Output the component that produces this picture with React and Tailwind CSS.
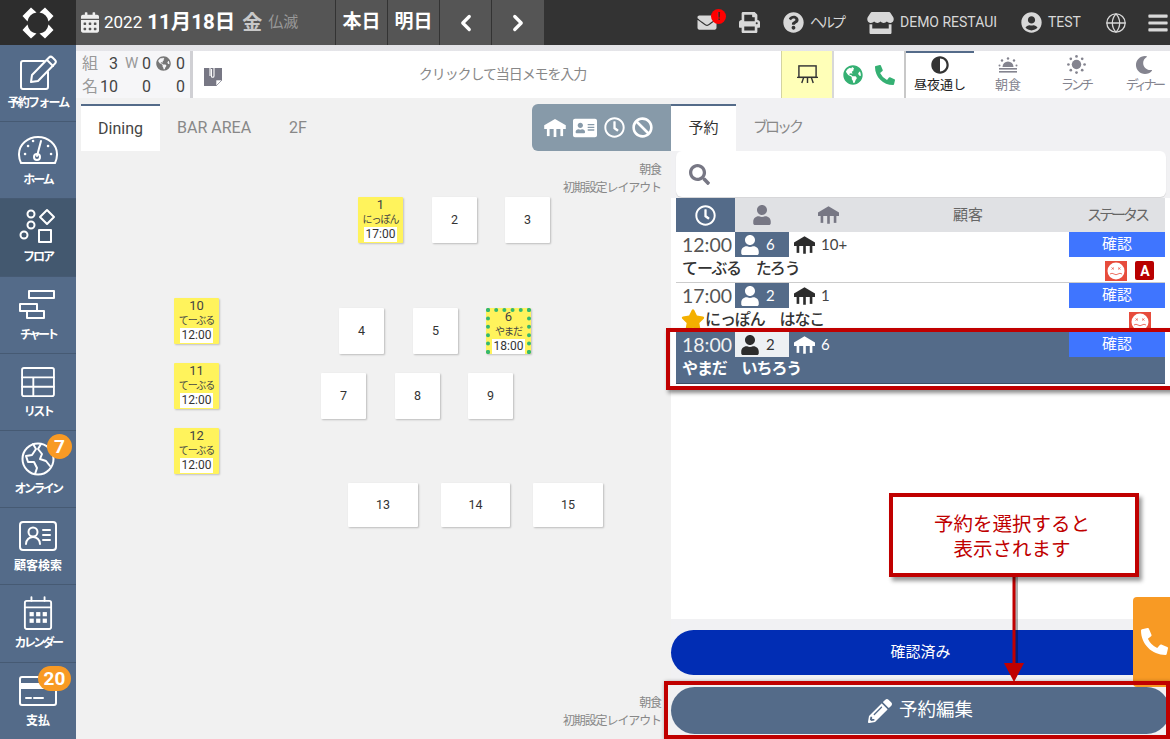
import React from "react";
import { FaEnvelope, FaPrint, FaQuestionCircle, FaStore, FaUserCircle, FaBars, FaCalendarAlt, FaGlobeAmericas, FaPhoneAlt, FaAdjust, FaMoon, FaSearch, FaAddressCard, FaRegClock, FaBan, FaUser, FaStar, FaPencilAlt } from "react-icons/fa";
import { LuChevronLeft, LuChevronRight, LuGlobe } from "react-icons/lu";

const FONT = "font-['Roboto','Noto_Sans_CJK_JP',sans-serif]";

function TableIcon({ className }) {
  return (
    <svg viewBox="0 0 24 20" className={className} fill="currentColor">
      <path d="M12 0 L24 7 V11 H0 V7 Z" />
      <rect x="3" y="11" width="3" height="8" />
      <rect x="10.5" y="11" width="3" height="9" />
      <rect x="18" y="11" width="3" height="8" />
    </svg>
  );
}

function Logo() {
  const piece = "M9 0.5 L14.5 5.5 A11 11 0 0 0 5.5 14.5 L0.5 9 Z";
  return (
    <svg viewBox="0 0 32 32" className="w-[32px] h-[32px]" fill="#fff">
      <path d={piece} />
      <path d={piece} transform="translate(32 0) scale(-1 1)" />
      <path d={piece} transform="translate(0 32) scale(1 -1)" />
      <path d={piece} transform="translate(32 32) scale(-1 -1)" />
    </svg>
  );
}

const S = { fill: "none", stroke: "#fff", strokeWidth: 2, strokeLinecap: "round", strokeLinejoin: "round" };

const navIcons = {
  form: (
    <svg viewBox="0 0 40 36" className="w-[40px] h-[36px]" {...S}>
      <path d="M26 6 H5 a2 2 0 0 0 -2 2 V32 a2 2 0 0 0 2 2 H28 a2 2 0 0 0 2 -2 V17" />
      <path d="M13 27 L14 20 L31 2.5 a2.5 2.5 0 0 1 3.5 0 L37 5 a2.5 2.5 0 0 1 0 3.5 L20 26 Z" />
      <path d="M29 5 L35 11" />
    </svg>
  ),
  home: (
    <svg viewBox="0 0 40 30" className="w-[40px] h-[30px]" {...S}>
      <path d="M3 28 a19 19 0 0 1 -2 -9 a19 17 0 0 1 38 0 a19 19 0 0 1 -2 9 Z" />
      <path d="M19 21 L23 6" />
      <circle cx="19" cy="22" r="3" />
      <path d="M7 19 h.1 M10 11 h.1 M15 6 h.1 M30 11 h.1 M33 19 h.1" strokeWidth="2.5" />
    </svg>
  ),
  floor: (
    <svg viewBox="0 0 38 38" className="w-[38px] h-[38px]" {...S}>
      <circle cx="12" cy="6" r="3.5" />
      <circle cx="12" cy="17" r="3.5" />
      <circle cx="5" cy="27" r="3.5" />
      <path d="M28 2 L35 9 L28 16 L21 9 Z" />
      <rect x="20" y="22" width="12" height="12" />
    </svg>
  ),
  chart: (
    <svg viewBox="0 0 38 30" className="w-[38px] h-[30px]" {...S}>
      <rect x="10" y="1" width="25" height="7" />
      <rect x="1" y="14" width="17" height="7" />
      <rect x="8" y="21" width="17" height="7" />
    </svg>
  ),
  list: (
    <svg viewBox="0 0 36 32" className="w-[34px] h-[30px]" {...S}>
      <rect x="1" y="1" width="34" height="30" rx="2" />
      <path d="M1 11 H35 M1 21 H35 M13 11 V31" />
    </svg>
  ),
  online: (
    <svg viewBox="0 0 34 34" className="w-[34px] h-[34px]" {...S}>
      <circle cx="17" cy="17" r="15.5" />
      <path d="M12 2 L15 7 L11 13 L5 14 L7 20 L13 20 L16 26 L14 32" />
      <path d="M20 2 L17 7 L21 12 L19 17 L25 19 L29 24" />
    </svg>
  ),
  search: (
    <svg viewBox="0 0 38 30" className="w-[38px] h-[30px]" {...S}>
      <rect x="1" y="1" width="36" height="28" rx="3" />
      <circle cx="14" cy="11" r="4.5" />
      <path d="M7 23 a7 7 0 0 1 14 0 M24 9 H31 M24 14 H31 M24 19 H31" />
    </svg>
  ),
  calendar: (
    <svg viewBox="0 0 32 36" className="w-[30px] h-[34px]" {...S}>
      <rect x="2" y="5" width="28" height="30" rx="2" />
      <path d="M2 12 H30 M9 1 V5 M23 1 V5" />
      <g fill="#fff" stroke="none">
        <rect x="7" y="17" width="4.5" height="4.5" /><rect x="14" y="17" width="4.5" height="4.5" /><rect x="21" y="17" width="4.5" height="4.5" />
        <rect x="7" y="24" width="4.5" height="4.5" /><rect x="14" y="24" width="4.5" height="4.5" /><rect x="21" y="24" width="4.5" height="4.5" />
      </g>
    </svg>
  ),
  pay: (
    <svg viewBox="0 0 38 30" className="w-[38px] h-[30px]" {...S}>
      <rect x="1" y="1" width="36" height="28" rx="2" />
      <rect x="1" y="7" width="36" height="6" fill="#fff" stroke="none" />
      <path d="M7 22 H12 M15 22 H24" />
    </svg>
  ),
};

const nav = [
  ["form", "予約フォーム", "tracking-[-1.8px]"],
  ["home", "ホーム", "tracking-[-2px]"],
  ["floor", "フロア", "tracking-[-2px]"],
  ["chart", "チャート", "tracking-[-3px]"],
  ["list", "リスト", "tracking-[-2.5px]"],
  ["online", "オンライン", "tracking-[-2.6px]"],
  ["search", "顧客検索", "tracking-normal"],
  ["calendar", "カレンダー", "tracking-[-2.6px]"],
  ["pay", "支払", "tracking-normal"],
];

function Sidebar() {
  return (
    <aside className="w-[76px] shrink-0 flex flex-col bg-[#546b89]">
      <div className="h-[45px] shrink-0 bg-[#2d2d2d] flex items-center justify-center"><Logo /></div>
      {nav.map(([k, label, tr]) => (
        <div key={k} className={`relative h-[77.2px] shrink-0 flex flex-col items-center border-b border-[#465a73] ${k === "floor" ? "bg-[#43586f]" : "bg-[#546b89]"}`}>
          <div className="h-[50px] flex items-center justify-center pt-[6px]">{navIcons[k]}</div>
          <div className={`text-white text-[12px] font-bold leading-none mt-[2px] whitespace-nowrap ${tr}`}>{label}</div>
          {k === "online" && <span className="absolute top-[3px] right-[4px] w-[25px] h-[25px] rounded-full bg-[#f89a24] text-white font-bold text-[19px] leading-[25px] text-center">7</span>}
          {k === "pay" && <span className="absolute top-[3px] right-[5px] w-[33px] h-[25px] rounded-full bg-[#f89a24] text-white font-bold text-[19px] leading-[25px] text-center">20</span>}
        </div>
      ))}
    </aside>
  );
}

function Header() {
  return (
    <header className="h-[45px] shrink-0 bg-[#333333] flex items-center text-[#d8d8d8]">
      <div className="h-full w-[468px] shrink-0 bg-[#555555] flex items-stretch text-white">
        <div className="w-[260px] flex items-center pl-[5px] border-r border-[#333]">
          <FaCalendarAlt className="text-[#eee] w-[18px] h-[21px]" />
          <span className="text-[17px] ml-[5px]">2022</span>
          <span className="text-[20.5px] font-bold ml-[5px]">11月18日</span>
          <span className="text-[20px] font-bold text-[#c8c8c8] ml-[7px]">金</span>
          <span className="text-[15px] text-[#999] ml-[6px]">仏滅</span>
        </div>
        <div className="w-[52px] flex items-center justify-center text-[19px] font-bold border-r border-[#333]">本日</div>
        <div className="w-[52px] flex items-center justify-center text-[19px] font-bold border-r border-[#333]">明日</div>
        <div className="w-[52px] flex items-center justify-center border-r border-[#333]"><LuChevronLeft className="w-[26px] h-[26px]" strokeWidth={3} /></div>
        <div className="w-[52px] flex items-center justify-center"><LuChevronRight className="w-[26px] h-[26px]" strokeWidth={3} /></div>
      </div>
      <div className="flex-1 flex items-center h-full min-w-0">
        <div className="relative ml-[152px] w-[22px] shrink-0">
          <FaEnvelope className="w-[22px] h-[19px]" />
          <span className="absolute -top-[4px] left-[15px] w-[15px] h-[15px] rounded-full bg-[#ff0000] text-[#333] text-[10px] font-bold leading-[15px] text-center">!</span>
        </div>
        <FaPrint className="ml-[21px] w-[21px] h-[21px] shrink-0" />
        <FaQuestionCircle className="ml-[23px] w-[21px] h-[21px] shrink-0" />
        <span className="ml-[6px] text-[14px] tracking-[-3px] w-[34px] whitespace-nowrap shrink-0">ヘルプ</span>
        <FaStore className="ml-[23px] w-[27px] h-[22px] shrink-0" />
        <span className="ml-[6px] text-[14px] w-[99px] shrink-0 overflow-hidden whitespace-nowrap">DEMO RESTAUI</span>
        <FaUserCircle className="ml-[22px] w-[21px] h-[21px] shrink-0" />
        <span className="ml-[6px] text-[14px] w-[33px] shrink-0">TEST</span>
        <LuGlobe className="ml-[24px] w-[22px] h-[22px] shrink-0" strokeWidth={1.4} />
        <FaBars className="ml-[20px] w-[22px] h-[22px] shrink-0" />
      </div>
    </header>
  );
}

function SunriseIcon() {
  return (
    <svg viewBox="0 0 20 16" className="w-[20px] h-[16px]" fill="currentColor">
      <path d="M4.5 10 a5.5 5.5 0 0 1 11 0 Z" />
      <rect x="1" y="11" width="18" height="1.6" />
      <rect x="1" y="14" width="18" height="1.6" />
      <circle cx="10" cy="1.5" r="1.2" /><circle cx="4" cy="3.5" r="1.2" /><circle cx="16" cy="3.5" r="1.2" /><circle cx="1.5" cy="8.5" r="1" /><circle cx="18.5" cy="8.5" r="1" />
    </svg>
  );
}

function DotSunIcon() {
  return (
    <svg viewBox="0 0 20 20" className="w-[19px] h-[19px]" fill="currentColor">
      <circle cx="10" cy="10" r="5" />
      <circle cx="10" cy="1.5" r="1.4" /><circle cx="10" cy="18.5" r="1.4" /><circle cx="1.5" cy="10" r="1.4" /><circle cx="18.5" cy="10" r="1.4" />
      <circle cx="4" cy="4" r="1.4" /><circle cx="16" cy="4" r="1.4" /><circle cx="4" cy="16" r="1.4" /><circle cx="16" cy="16" r="1.4" />
    </svg>
  );
}

function MealTab({ icon, label, active, labelClass }) {
  return (
    <div className={`w-[68px] shrink-0 h-full flex flex-col items-center border-t-2 ${active ? "border-[#546b89] text-[#222]" : "border-transparent text-[#84848f]"}`}>
      <div className="h-[23px] flex items-center justify-center">{icon}</div>
      <div className={`text-[13px] leading-[17px] whitespace-nowrap ${labelClass}`}>{label}</div>
    </div>
  );
}

function MemoIcon() {
  return (
    <svg viewBox="0 0 18 22" className="w-[18px] h-[22px]">
      <path d="M0 4 H18 V16 L12 22 H0 Z" fill="#777784" />
      <path d="M18 16 H12 V22 Z" fill="#fff" stroke="#777784" strokeWidth="0.6" />
      <path d="M6 5 V2.5 a2 2 0 0 1 4 0 V12 a1.3 1.3 0 0 1 -2.6 0 V5" fill="none" stroke="#fff" strokeWidth="1.1" />
      <path d="M6 5 V12" fill="none" stroke="#fff" strokeWidth="1.1" />
    </svg>
  );
}

function SubBar() {
  return (
    <div className="shrink-0 pt-[6px] bg-linear-to-b from-[#e3e3e7] to-[#f4f4f6]">
      <div className="h-[47px] flex bg-white items-stretch">
        <div className="w-[114px] shrink-0 pl-[6px] flex flex-col justify-center bg-[#f6f6f8] text-[16px] leading-[23px] text-[#444]">
          <div className="flex items-center">
            <span className="text-[#999] w-[18px]">組</span><span className="w-[18px] text-right">3</span>
            <span className="text-[#999] ml-[7px] w-[17px] text-[15px]">W</span><span className="w-[9px]">0</span>
            <FaGlobeAmericas className="ml-[5px] w-[15px] h-[15px] text-[#777]" /><span className="ml-[5px]">0</span>
          </div>
          <div className="flex items-center">
            <span className="text-[#999] w-[18px]">名</span><span className="w-[18px] text-right">10</span>
            <span className="ml-[24px] w-[9px]">0</span><span className="ml-[25px]">0</span>
          </div>
        </div>
        <div className="w-[3px] shrink-0 bg-[#d0d0d4]" />
        <div className="w-[588px] shrink-0 flex items-center pl-[11px]">
          <MemoIcon />
          <div className="flex-1 text-center text-[14px] tracking-[-1.1px] text-[#888] pl-[2px]">クリックして当日メモを入力</div>
        </div>
        <div className="w-[51px] shrink-0 bg-[#ffffb8] border-l border-[#d4d4a0] flex items-center justify-center">
          <svg viewBox="0 0 22 22" className="w-[21px] h-[21px]" fill="none" stroke="#333" strokeWidth="1.5">
            <rect x="2" y="2" width="18" height="12" /><path d="M0 14 H22 M11 14 V20 M7 14 L5 20 M15 14 L17 20" />
          </svg>
        </div>
        <div className="w-[2px] shrink-0 bg-[#d8d8d8]" />
        <div className="w-[70px] shrink-0 flex items-center pl-[9px] gap-[12px] text-[#35b073]">
          <FaGlobeAmericas className="w-[20px] h-[20px]" />
          <FaPhoneAlt className="w-[20px] h-[20px]" />
        </div>
        <div className="w-[2px] shrink-0 bg-[#c8c8c8]" />
        <div className="flex flex-1 min-w-0 h-full overflow-hidden">
          <MealTab active icon={<FaAdjust className="text-[#333] w-[18px] h-[18px]" />} label="昼夜通し" labelClass="tracking-normal" />
          <MealTab icon={<SunriseIcon />} label="朝食" labelClass="tracking-normal" />
          <MealTab icon={<DotSunIcon />} label="ランチ" labelClass="tracking-[-3px]" />
          <MealTab icon={<FaMoon className="w-[18px] h-[18px]" />} label="ディナー" labelClass="tracking-[-3.6px]" />
        </div>
      </div>
    </div>
  );
}

const tables = [
  { n: 1, x: 282, y: 46, name: "にっぽん", time: "17:00" },
  { n: 2, x: 356, y: 46 },
  { n: 3, x: 429, y: 46 },
  { n: 4, x: 263, y: 157 },
  { n: 5, x: 337, y: 157 },
  { n: 6, x: 410, y: 157, name: "やまだ", time: "18:00", sel: true },
  { n: 7, x: 245, y: 222 },
  { n: 8, x: 319, y: 222 },
  { n: 9, x: 392, y: 222 },
  { n: 10, x: 98, y: 147, name: "てーぶる", time: "12:00" },
  { n: 11, x: 98, y: 212, name: "てーぶる", time: "12:00" },
  { n: 12, x: 98, y: 277, name: "てーぶる", time: "12:00" },
  { n: 13, x: 272, y: 332, w: 70 },
  { n: 14, x: 365, y: 332, w: 69 },
  { n: 15, x: 457, y: 332, w: 70 },
];

function FloorTable({ t }) {
  const pos = { left: t.x, top: t.y, width: t.w || 45, height: t.w ? 44 : 46 };
  if (!t.name) {
    return (
      <div style={pos} className="absolute bg-white rounded-[1px] shadow-[1px_1px_2px_rgba(0,0,0,0.22)] flex items-center justify-center text-[12.5px] text-[#333]">{t.n}</div>
    );
  }
  return (
    <div style={pos} className={`absolute bg-[#fff35c] rounded-[1px] shadow-[1px_1px_2px_rgba(0,0,0,0.2)] flex flex-col items-center text-[#444] ${t.sel ? "border-[4px] border-dotted border-[#35b86f] pt-0" : "pt-[1px]"}`}>
      <div className={`text-[13px] leading-[14px] ${t.sel ? "-mt-[2px]" : ""}`}>{t.n}</div>
      <div className="text-[10px] tracking-[-1px] leading-[15px] whitespace-nowrap">{t.name}</div>
      <div className="bg-white px-[2px] text-[12px] leading-[15px] text-[#333] whitespace-nowrap">{t.time}</div>
    </div>
  );
}

function Floor() {
  return (
    <section className="w-[595px] shrink-0 flex flex-col bg-[#f1f1f1]">
      <div className="h-[53px] shrink-0 flex pl-[5px] pt-[6px] text-[16px]">
        <div className="w-[79px] bg-white border-t-2 border-[#546b89] flex items-center justify-center text-[#444]">Dining</div>
        <div className="ml-[17px] flex items-center text-[#888]">BAR AREA</div>
        <div className="ml-[38px] flex items-center text-[#888]">2F</div>
        <div className="ml-auto w-[139px] bg-[#879aa9] rounded-l-[6px] flex items-center justify-center gap-[7px] pr-[6px] text-white">
          <TableIcon className="w-[22px] h-[18px]" />
          <FaAddressCard className="w-[24px] h-[22px]" />
          <FaRegClock className="w-[21px] h-[21px]" />
          <FaBan className="w-[21px] h-[21px]" />
        </div>
      </div>
      <div className="relative flex-1">
        <div className="absolute right-[10px] top-[10px] text-right text-[12px] tracking-[-1.1px] leading-[18px] text-[#888]">朝食<br />初期設定レイアウト</div>
        <div className="absolute right-[10px] bottom-[9px] text-right text-[12px] tracking-[-1.1px] leading-[18px] text-[#888]">朝食<br />初期設定レイアウト</div>
        {tables.map((t) => <FloorTable key={t.n} t={t} />)}
      </div>
    </section>
  );
}

function Chip({ dark, value }) {
  return (
    <div className={`w-[54px] h-[25px] shrink-0 flex items-center pl-[5px] ${dark ? "bg-[#546b89] text-white" : "bg-[#edf0f3] text-[#333]"}`}>
      <FaUser className={`w-[20px] h-[20px] ${dark ? "text-white" : "text-[#2c2c2c]"}`} />
      <span className="ml-[6px] text-[15px] font-['Lato',sans-serif]">{value}</span>
    </div>
  );
}

function Face({ className }) {
  return (
    <svg viewBox="0 0 22 20" className={className}>
      <rect width="22" height="20" fill="#e74c3c" />
      <circle cx="11" cy="10" r="8.5" fill="#fff" />
      <path d="M6.5 6.5 L9 8.5 M9 6.5 L6.5 8.5 M13 6.5 L15.5 8.5 M15.5 6.5 L13 8.5" stroke="#e74c3c" strokeWidth="0.7" />
      <path d="M5 13 Q7 11.5 9 13 Q11 14.5 13 13 Q15 11.5 17 13" stroke="#e74c3c" strokeWidth="0.8" fill="none" />
    </svg>
  );
}

function Row({ time, people, table, name, star, marks, selected, extra }) {
  return (
    <div className={`relative ${extra} ${selected ? "bg-[#546b89] text-white border-b border-[#3d4d63]" : "bg-white text-[#444]"}`}>
      <div className="flex h-[25px] items-center">
        <div className={`w-[59px] pl-[6px] text-[19.5px] font-['Lato',sans-serif] ${selected ? "text-[#f1f1f1]" : "text-[#555]"}`}>{time}</div>
        <Chip dark={!selected} value={people} />
        <TableIcon className={`ml-[5px] w-[21px] h-[18px] ${selected ? "text-white" : "text-[#2c2c2c]"}`} />
        <span className="ml-[6px] text-[15px] font-['Lato',sans-serif]">{table}</span>
        <div className="ml-auto w-[96px] h-[25px] bg-[#3f75ff] text-white text-[15px] flex items-center justify-center">確認</div>
      </div>
      <div className={`flex items-center pl-[6px] h-[24px] text-[16px] tracking-[-1.1px] leading-[24px] ${selected ? "font-bold text-white" : "font-medium text-[#333]"}`}>
        {star && <FaStar className="w-[24px] h-[22px] text-[#f4b000] -ml-[1px] shrink-0" />}
        <span className="whitespace-pre">{name}</span>
        <div className="ml-auto flex items-center">{marks}</div>
      </div>
    </div>
  );
}

function RightPanel() {
  return (
    <section className="flex-1 flex flex-col min-w-0">
      <div className="h-[53px] shrink-0 flex pt-[6px] text-[15px]">
        <div className="w-[65px] bg-white border-t-2 border-[#546b89] flex items-center justify-center text-[#333]">予約</div>
        <div className="ml-[17px] flex items-center text-[#888] tracking-[-3px]">ブロック</div>
      </div>
      <div className="h-[468px] shrink-0 bg-white">
        <div className="h-[47px] bg-[#f1f1f3] pl-[5px] pr-[4px]">
          <div className="h-[46px] bg-white rounded-[6px] flex items-center pl-[13px] shadow-[0_1px_1px_rgba(0,0,0,0.12)]">
            <FaSearch className="w-[21px] h-[21px] text-[#777784]" />
          </div>
        </div>
        <div className="pl-[5px] pr-[5px] bg-white">
          <div className="h-[34px] bg-[#e0e1e4] flex items-center text-[#666]">
            <div className="w-[59px] h-full bg-[#546b89] flex items-center justify-center"><FaRegClock className="w-[21px] h-[21px] text-white" /></div>
            <FaUser className="ml-[17px] w-[20px] h-[20px] text-[#777784]" />
            <TableIcon className="ml-[46px] w-[21px] h-[18px] text-[#777784]" />
            <span className="ml-[114px] text-[15px]">顧客</span>
            <span className="ml-auto w-[96px] text-center text-[15px] tracking-[-3px]">ステータス</span>
          </div>
          <Row time="12:00" people="6" table="10+" name="てーぶる　たろう" extra="h-[51px] border-b border-[#ccc]" marks={<>
            <Face className="w-[22px] h-[20px] mt-[3px]" />
            <span className="ml-[8px] mr-[11px] mt-[3px] w-[19px] h-[19px] rounded-[2px] bg-[#b80000] text-white text-[14px] font-bold flex items-center justify-center">A</span>
          </>} />
          <Row time="17:00" people="2" table="1" star name="にっぽん　はなこ" extra="h-[49px]" marks={<Face className="w-[22px] h-[20px] mr-[14px] mt-[3px]" />} />
          <Row selected time="18:00" people="2" table="6" name="やまだ　いちろう" extra="h-[52px]" />
        </div>
      </div>
      <div className="h-[45px] shrink-0 mt-[11px] rounded-full bg-[#012db4] text-white text-[15px] flex items-center justify-center">確認済み</div>
      <div className="h-[47px] shrink-0 mt-[12px] rounded-full bg-[#546b89] text-white text-[18.5px] flex items-center justify-center gap-[7px]">
        <FaPencilAlt className="w-[24px] h-[24px]" />予約編集
      </div>
    </section>
  );
}

function Annotations() {
  return (
    <>
      <div className="absolute left-[666px] top-[328px] w-[510px] h-[62px] border-[4px] border-[#c00000] shadow-[2px_3px_4px_rgba(0,0,0,0.45)]" />
      <div className="absolute left-[1133px] top-[597px] w-[37px] h-[90px] rounded-l-[4px] bg-[#f89a24] flex items-start pt-[31px] pl-[8px]">
        <FaPhoneAlt className="w-[27px] h-[27px] text-white" />
      </div>
      <div className="absolute left-[664px] top-[681px] w-[506px] h-[58px] border-[4px] border-[#c00000] shadow-[1px_1px_4px_rgba(0,0,0,0.45)]" />
      <svg viewBox="0 0 24 110" className="absolute left-[1002px] top-[575px] w-[24px] h-[110px]">
        <rect x="13" y="2" width="3" height="86" fill="rgba(0,0,0,0.3)" />
        <rect x="10.5" y="0" width="3" height="88" fill="#c00000" />
        <path d="M2 88 H22 L12 107 Z" fill="#c00000" />
      </svg>
      <div className="absolute left-[889px] top-[493px] w-[250px] h-[84px] bg-white border-[4px] border-[#c00000] shadow-[3px_4px_4px_rgba(0,0,0,0.4)] flex items-center justify-center text-center text-[#c00000] text-[19.5px] leading-[25px] pt-[3px] pr-[4px]">
        予約を選択すると<br />表示されます
      </div>
    </>
  );
}

export default function App() {
  return (
    <div className={`relative w-[1170px] h-[739px] overflow-hidden flex bg-[#f1f1f3] ${FONT}`}>
      <Sidebar />
      <main className="flex-1 flex flex-col min-w-0">
        <Header />
        <SubBar />
        <div className="flex flex-1 min-h-0">
          <Floor />
          <RightPanel />
        </div>
      </main>
      <Annotations />
    </div>
  );
}
